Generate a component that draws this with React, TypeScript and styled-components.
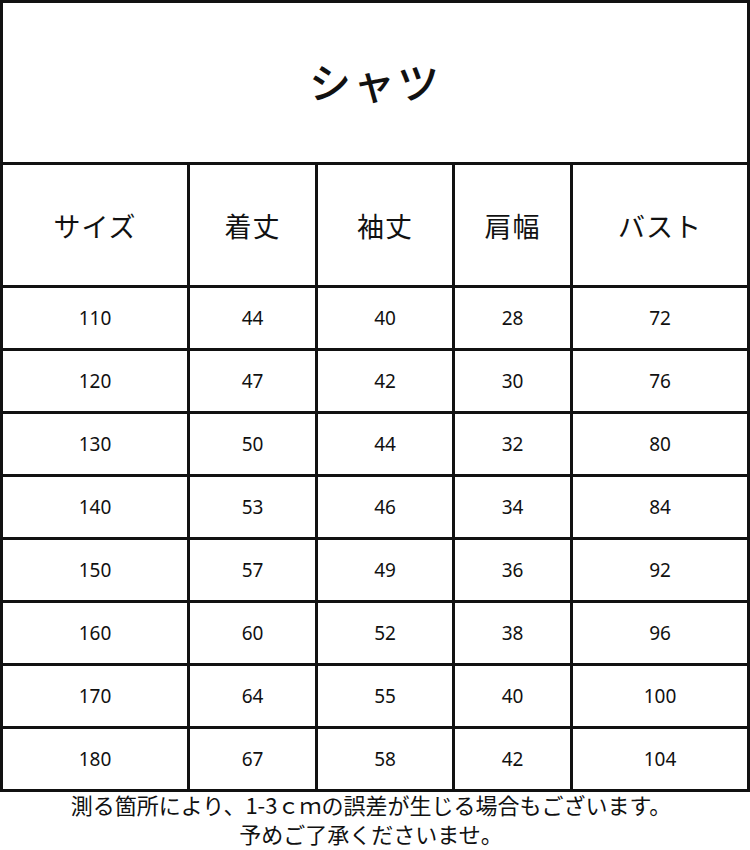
import styled, { createGlobalStyle } from "styled-components";

const GlobalStyle = createGlobalStyle`
  body {
    margin: 0;
    background: #ffffff;
    font-family: "Noto Sans CJK JP", "Noto Sans", sans-serif;
    color: #111;
  }
`;

const Page = styled.div`
  width: 750px;
  height: 850px;
  overflow: hidden;
`;

const Table = styled.div`
  display: grid;
  grid-template-columns: 184px 125px 134px 115px 174px;
  grid-template-rows: 159px 120px repeat(8, 60px);
  gap: 3px;
  padding: 3px;
  background: #111;
  width: 750px;
  box-sizing: border-box;
`;

const Title = styled.div`
  grid-column: 1 / -1;
  background: #fff;
  display: flex;
  align-items: center;
  justify-content: center;
  font-size: 42px;
  font-weight: 500;
  letter-spacing: 2px;
  padding-bottom: 4px;
`;

const Cell = styled.div<{ $head?: boolean }>`
  background: #fff;
  display: flex;
  align-items: center;
  justify-content: center;
  font-family: ${(p) =>
    p.$head
      ? `"Noto Sans CJK JP", sans-serif`
      : `"Noto Sans", "Open Sans", sans-serif`};
  font-size: ${(p) => (p.$head ? "27px" : "19px")};
  letter-spacing: ${(p) => (p.$head ? "1px" : "0")};
`;

const Note = styled.p`
  margin: -2px 0 0;
  text-align: center;
  font-size: 22px;
  line-height: 29px;
  padding-right: 8px;
`;

const headers = ["サイズ", "着丈", "袖丈", "肩幅", "バスト"];

const rows = [
  [110, 44, 40, 28, 72],
  [120, 47, 42, 30, 76],
  [130, 50, 44, 32, 80],
  [140, 53, 46, 34, 84],
  [150, 57, 49, 36, 92],
  [160, 60, 52, 38, 96],
  [170, 64, 55, 40, 100],
  [180, 67, 58, 42, 104],
];

export default function App() {
  return (
    <Page>
      <GlobalStyle />
      <Table>
        <Title>シャツ</Title>
        {headers.map((h) => (
          <Cell key={h} $head>
            {h}
          </Cell>
        ))}
        {rows.map((r, i) =>
          r.map((v, j) => <Cell key={`${i}-${j}`}>{v}</Cell>)
        )}
      </Table>
      <Note>
        測る箇所により、1-3ｃｍの誤差が生じる場合もございます。
        <br />
        予めご了承くださいませ。
      </Note>
    </Page>
  );
}
